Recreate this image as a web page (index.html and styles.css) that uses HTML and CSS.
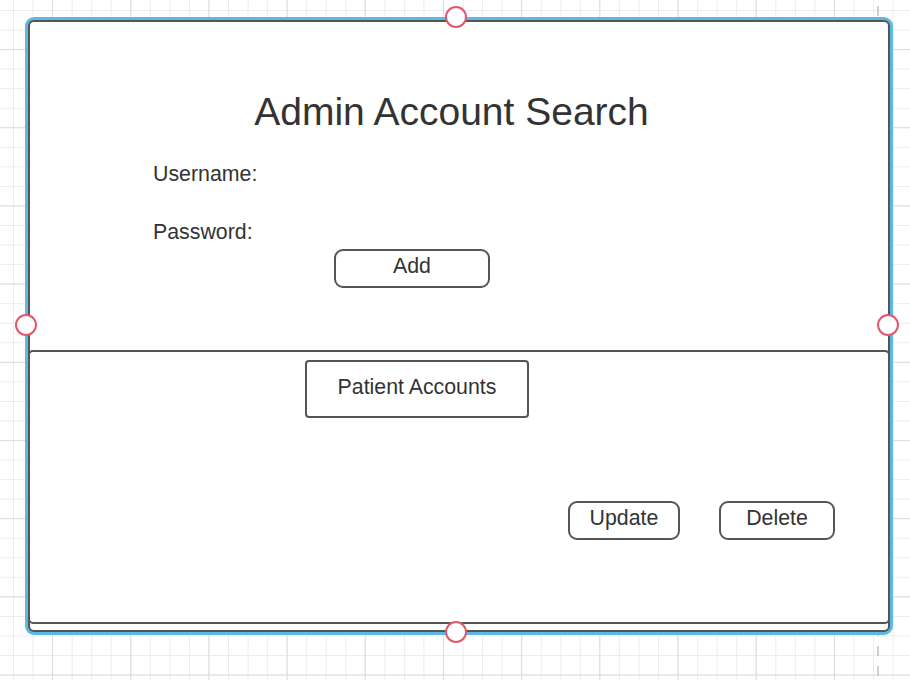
FILE: index.html
```html
<!DOCTYPE html>
<html lang="en">
<head>
<meta charset="utf-8">
<title>Admin Account Search</title>
<link rel="stylesheet" href="styles.css">
</head>
<body>
<div class="guide"></div>
<div class="frame">
  <div class="form">
    <h1 class="title">Admin Account Search</h1>
    <div class="label">Username:</div>
    <div class="label pw">Password:</div>
    <button class="btn add">Add</button>
  </div>
  <div class="panel">
    <div class="tab">Patient Accounts</div>
    <div class="actions">
      <button class="btn update">Update</button>
      <button class="btn delete">Delete</button>
    </div>
  </div>
  <span class="handle h-top"></span>
  <span class="handle h-left"></span>
  <span class="handle h-right"></span>
  <span class="handle h-bottom"></span>
</div>
</body>
</html>
```
FILE: styles.css
```css
html, body {
  margin: 0;
  padding: 0;
  width: 910px;
  height: 680px;
  overflow: hidden;
}
body {
  background-color: #ffffff;
  background-image:
    linear-gradient(to right, #dcdcdc 1px, transparent 1px),
    linear-gradient(to bottom, #dcdcdc 1px, transparent 1px),
    linear-gradient(to right, #ececec 1px, transparent 1px),
    linear-gradient(to bottom, #ececec 1px, transparent 1px);
  background-size: 78.2px 78.2px, 78.2px 78.2px, 19.55px 19.55px, 19.55px 19.55px;
  background-position: 52px 0, 0 49px, 13px 0, 0 10px;
  font-family: "Liberation Sans", Arial, sans-serif;
  color: #333333;
  position: relative;
}
.guide {
  position: absolute;
  left: 877px;
  top: 6px;
  width: 2px;
  height: 680px;
  background: repeating-linear-gradient(to bottom, #cfcfcf 0 10px, transparent 10px 20px);
}
.frame {
  position: relative;
  box-sizing: border-box;
  margin: 20px 0 0 28px;
  width: 862px;
  height: 612px;
  border: 2px solid #555555;
  border-radius: 6px;
  background: #ffffff;
  box-shadow: 0 0 0 3px #5cb9e6;
}
.form {
  height: 328px;
  padding-top: 67px;
  box-sizing: border-box;
}
.title {
  margin: 0;
  padding-right: 15px;
  font-size: 39px;
  line-height: 45px;
  font-weight: normal;
  text-align: center;
  color: #333333;
}
.label {
  margin-top: 28px;
  padding-left: 123px;
  font-size: 21.33px;
  line-height: 25px;
}
.label.pw {
  margin-top: 33px;
}
.btn {
  display: block;
  box-sizing: border-box;
  height: 39px;
  padding: 3px 0 7px;
  border: 2px solid #555555;
  border-radius: 9px;
  background: #ffffff;
  font-family: "Liberation Sans", Arial, sans-serif;
  font-size: 21.33px;
  line-height: 25px;
  color: #333333;
  text-align: center;
}
.add {
  margin: 4px 0 0 304px;
  width: 156px;
}
.panel {
  box-sizing: border-box;
  margin: 0 -2px;
  height: 274px;
  border: 2px solid #555555;
  border-radius: 5px;
}
.tab {
  box-sizing: border-box;
  margin: 8px 0 0 275px;
  width: 224px;
  height: 58px;
  padding-top: 13px;
  border: 2px solid #555555;
  border-radius: 4px;
  font-size: 21.33px;
  line-height: 25px;
  text-align: center;
}
.actions {
  display: flex;
  justify-content: flex-end;
  gap: 39px;
  margin-top: 83px;
  padding-right: 53px;
}
.update { width: 112px; }
.delete { width: 116px; }
.handle {
  position: absolute;
  width: 18px;
  height: 18px;
  border: 2.5px solid #e0586b;
  border-radius: 50%;
  background: #ffffff;
}
.h-top { left: 415px; top: -16px; }
.h-left { left: -15.5px; top: 291.5px; }
.h-right { left: 847px; top: 291.5px; }
.h-bottom { left: 414.5px; top: 598.5px; }
```
